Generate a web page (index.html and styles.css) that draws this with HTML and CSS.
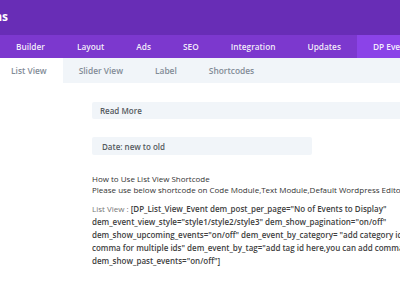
FILE: index.html
```html
<!DOCTYPE html>
<html lang="en">
<head>
  <meta charset="UTF-8">
  <meta name="viewport" content="width=device-width, initial-scale=1.0">
  <title>DP Events Settings</title>
  <link rel="stylesheet" href="styles.css">
</head>
<body>
  <div class="header">
    <div class="brand">Divi Events Plugins</div>
  </div>

  <div class="nav">
    <a class="nav-item">Builder</a>
    <a class="nav-item">Layout</a>
    <a class="nav-item">Ads</a>
    <a class="nav-item">SEO</a>
    <a class="nav-item">Integration</a>
    <a class="nav-item">Updates</a>
    <a class="nav-item active">DP Events</a>
  </div>

  <div class="subnav">
    <a class="sub-item active">List View</a>
    <a class="sub-item">Slider View</a>
    <a class="sub-item">Label</a>
    <a class="sub-item">Shortcodes</a>
  </div>

  <div class="content">
    <div class="field field-wide">Read More</div>
    <div class="field field-select">Date: new to old</div>

    <div class="help">
      <p class="intro">How to Use List View Shortcode<br>
      Please use below shortcode on Code Module,Text Module,Default Wordpress Editor</p>
      <p class="usage"><span class="label">List View : </span><span class="code">[DP_List_View_Event dem_post_per_page="No of Events to Display" dem_event_view_style="style1/style2/style3" dem_show_pagination="on/off" dem_show_upcoming_events="on/off" dem_event_by_category= "add category id here,you can add comma for multiple ids" dem_event_by_tag="add tag id here,you can add comma for multiple ids" dem_show_past_events="on/off"]</span></p>
    </div>
  </div>
</body>
</html>
```

FILE: styles.css
```css
body {
  margin: 0;
  width: 400px;
  overflow: hidden;
  background: #ffffff;
  font-family: "Open Sans", Arial, sans-serif;
}

.header {
  height: 35px;
  background: #682db6;
  display: flex;
  align-items: center;
}

.brand {
  width: 8px;
  overflow: hidden;
  direction: rtl;
  white-space: nowrap;
  color: #ffffff;
  font-size: 12px;
  font-weight: 700;
  margin-top: -2px;
}

.nav {
  height: 23px;
  background: #7c38ce;
  display: flex;
  white-space: nowrap;
}

.nav-item {
  display: flex;
  align-items: center;
  padding: 0 16px;
  color: rgba(255, 255, 255, 0.92);
  font-size: 8.3px;
  font-weight: 600;
}

.nav-item.active {
  background: #8b43e8;
}

.subnav {
  height: 25px;
  background: #f1f5f9;
  display: flex;
  margin-left: -5px;
  white-space: nowrap;
}

.sub-item {
  display: flex;
  align-items: center;
  padding: 0 16px;
  color: #828b96;
  font-size: 8.4px;
  font-weight: 600;
}

.sub-item.active {
  background: #ffffff;
}

.content {
  padding: 19px 0 0 92px;
}

.field {
  background: #f1f5f9;
  border-radius: 2px;
  color: #555a60;
  font-size: 8px;
  font-weight: 600;
  height: 17px;
  display: flex;
  align-items: center;
  white-space: nowrap;
}

.field-wide {
  padding-left: 8px;
  margin-right: -20px;
}

.field-select {
  width: 210px;
  height: 18px;
  padding-left: 10px;
  margin-top: 18px;
}

.help {
  margin-top: 18px;
  width: 410px;
  font-size: 8px;
  color: #333333;
}

.help p {
  margin: 0;
}

.intro {
  line-height: 11px;
  white-space: nowrap;
}

.usage {
  padding-top: 7px;
  line-height: 13px;
}

.label {
  color: #777777;
}

.code {
  color: #3f3f3f;
  font-weight: 600;
}
```
